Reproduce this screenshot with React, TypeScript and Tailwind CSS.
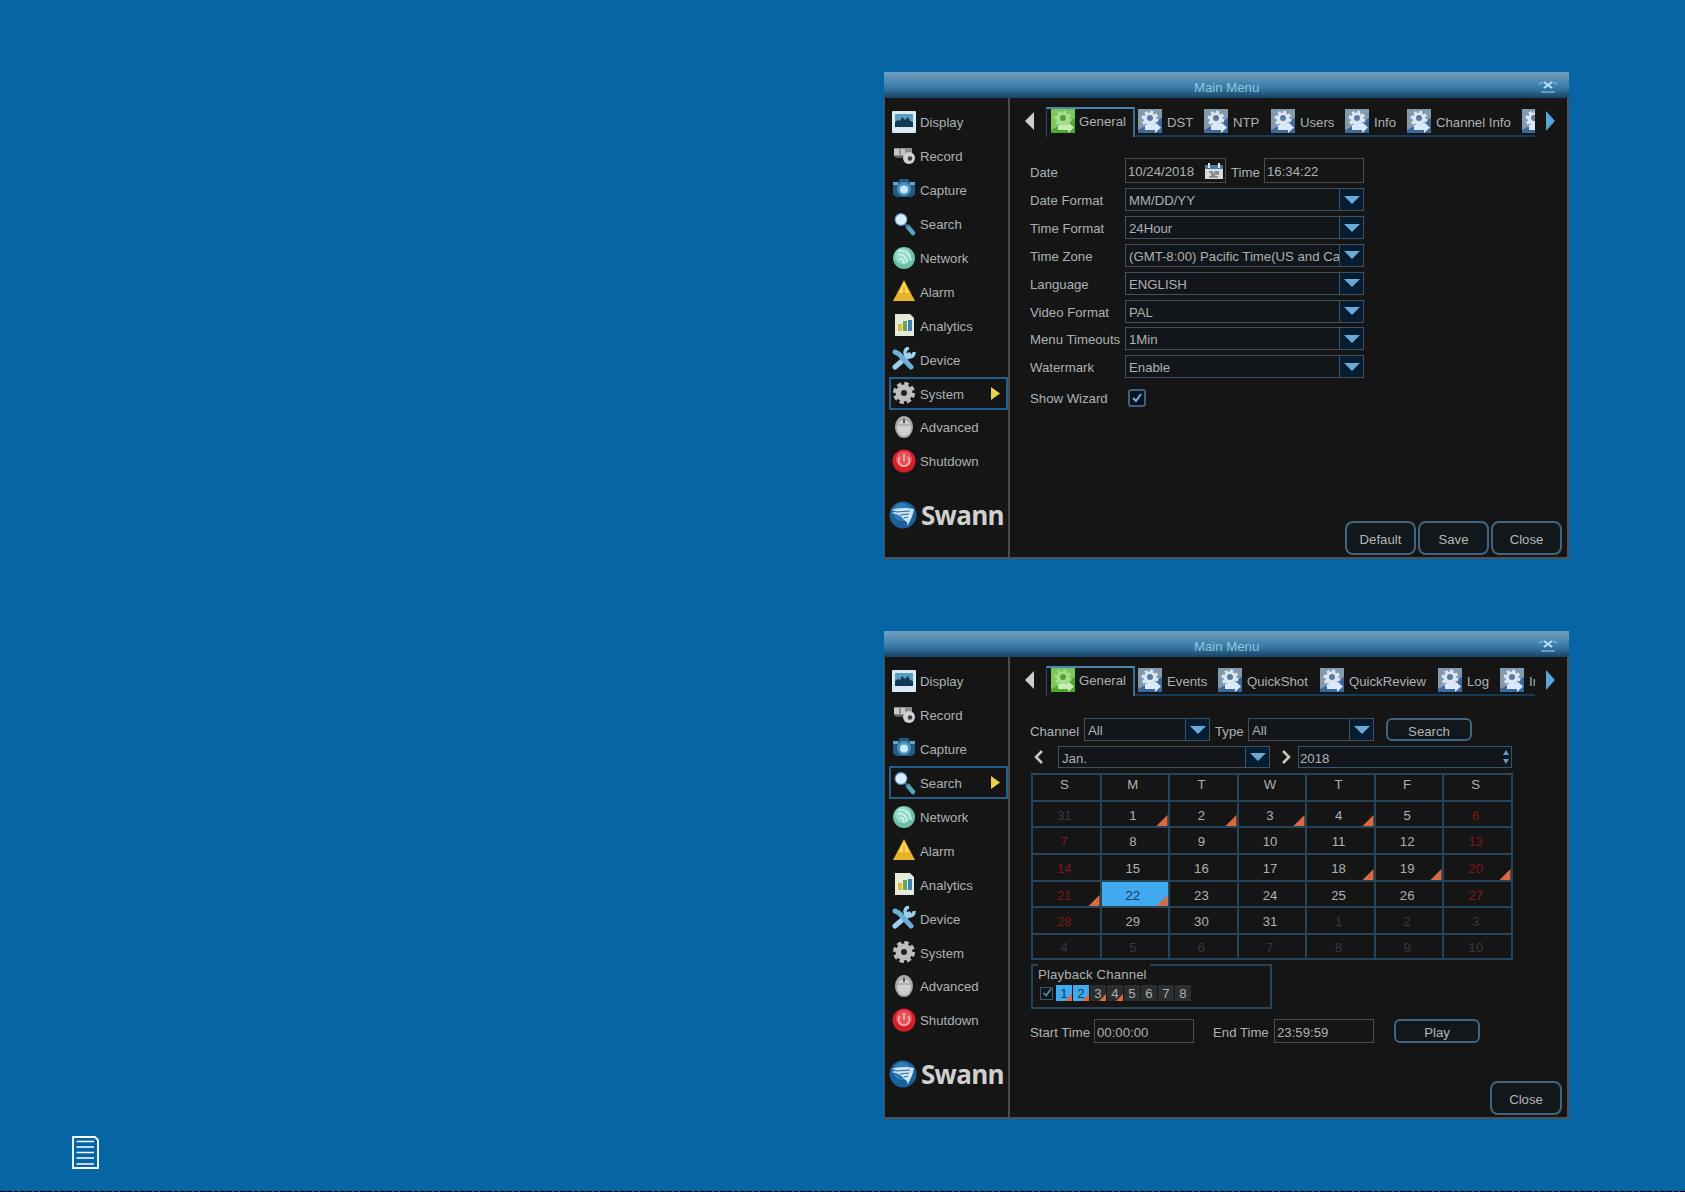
import type { ReactNode } from "react";
import clsx from "clsx";

type MenuName =
  | "Display"
  | "Record"
  | "Capture"
  | "Search"
  | "Network"
  | "Alarm"
  | "Analytics"
  | "Device"
  | "System"
  | "Advanced"
  | "Shutdown";

const MENU: MenuName[] = [
  "Display",
  "Record",
  "Capture",
  "Search",
  "Network",
  "Alarm",
  "Analytics",
  "Device",
  "System",
  "Advanced",
  "Shutdown",
];

type Tab = { label: string; width: string };

const SYSTEM_TABS: Tab[] = [
  { label: "DST", width: "w-[66px]" },
  { label: "NTP", width: "w-[67px]" },
  { label: "Users", width: "w-[74px]" },
  { label: "Info", width: "w-[62px]" },
  { label: "Channel Info", width: "w-[115px]" },
  { label: "", width: "w-[40px]" },
];

const SEARCH_TABS: Tab[] = [
  { label: "Events", width: "w-[80px]" },
  { label: "QuickShot", width: "w-[102px]" },
  { label: "QuickReview", width: "w-[118px]" },
  { label: "Log", width: "w-[62px]" },
  { label: "In", width: "w-[62px]" },
];

const SETTINGS = [
  ["Date Format", "MM/DD/YY"],
  ["Time Format", "24Hour"],
  ["Time Zone", "(GMT-8:00) Pacific Time(US and Ca"],
  ["Language", "ENGLISH"],
  ["Video Format", "PAL"],
  ["Menu Timeouts", "1Min"],
  ["Watermark", "Enable"],
];

const WEEKDAYS = ["S", "M", "T", "W", "T", "F", "S"];

// 31 Dec is the first cell shown; 42 cells in all.
const DAYS = Array.from({ length: 42 }, (_, i) => {
  const inMonth = i >= 1 && i <= 31;
  return { day: i === 0 ? 31 : inMonth ? i : i - 31, inMonth, weekend: i % 7 === 0 || i % 7 === 6 };
});
const RECORDED = [1, 2, 3, 4, 18, 19, 20, 21, 22];

function MenuIcon({ name }: { name: MenuName }) {
  switch (name) {
    case "Display":
      return (
        <>
          <rect x="0" y="1" width="24" height="22" rx="1" fill="#d9eaf2" />
          <rect x="3" y="4" width="18" height="13" fill="#5d9dbd" />
          <path d="M3 17v-5l3-2 2 1 2-4 3 3 3-3 2 4 3 1v5z" fill="#123a56" />
        </>
      );
    case "Record":
      return (
        <>
          <path d="M2 4h18v8H2z" fill="#8d8d8d" />
          <path d="M2 5h5v6H2zM9 5h4v6H9z" fill="#c6c6c6" />
          <path d="M2 12h9v2H4z" fill="#5c5c5c" />
          <circle cx="17" cy="14" r="6" fill="#d2d2d2" />
          <circle cx="18" cy="14.500" r="2.300" fill="#3d3d3d" />
        </>
      );
    case "Capture":
      return (
        <>
          <path d="M1 4h5l2-3h8l2 3h5v12l-3 3H4l-3-3z" fill="#225a82" />
          <path d="M1 4h5v3H1zM18 4h5v3h-5z" fill="#6aa6cb" />
          <circle cx="12" cy="11" r="7" fill="#4d92bd" />
          <circle cx="12" cy="11.500" r="4" fill="#c7e9f8" />
        </>
      );
    case "Search":
      return (
        <>
          <path d="M16 15l5 6" stroke="#57a2bf" strokeWidth="4.500" strokeLinecap="round" />
          <path d="M12 11l4 4" stroke="#3d6f94" strokeWidth="2" />
          <circle cx="9" cy="7.500" r="6.500" fill="#5c92c8" />
          <circle cx="9" cy="7.500" r="5.300" fill="#dceefb" />
        </>
      );
    case "Network":
      return (
        <>
          <circle cx="12" cy="12" r="11" fill="#6cc0a6" />
          <circle cx="11" cy="10" r="8" fill="#95d9c6" />
          <path
            d="M6 9c5-2 9 3 9 8M7 13c3-1 5 1 5 5M7 5c7-1 12 4 12 10"
            fill="none"
            stroke="#d2f3e9"
            strokeWidth="1.500"
          />
        </>
      );
    case "Alarm":
      return (
        <>
          <path d="M12 1L23 22H1z" fill="#e9b42c" />
          <path d="M12 3l5 11H7z" fill="#f7d85b" />
          <path d="M12 8v7M12 17v2" stroke="#d9a52a" strokeWidth="1.500" />
        </>
      );
    case "Analytics":
      return (
        <>
          <path d="M3 1h15l4 4v18H3z" fill="#e6ead8" />
          <path d="M6 11h4v7H6z" fill="#e2bb38" />
          <path d="M11 8h4v10h-4z" fill="#67a75b" />
          <path d="M16 7h4v11h-4z" fill="#3d82b5" />
        </>
      );
    case "Device":
      return (
        <>
          <path d="M3 20L17 8" stroke="#9bd0ef" strokeWidth="5" strokeLinecap="round" />
          <path d="M22 5a4.500 4.500 0 1 1-5-4" fill="none" stroke="#9bd0ef" strokeWidth="3.500" />
          <path d="M3 5l4 2 12 13" fill="none" stroke="#6eafd8" strokeWidth="5" strokeLinecap="round" />
        </>
      );
    case "System":
      return (
        <>
          <circle cx="12" cy="12" r="8.500" fill="#bdbdbd" />
          <circle cx="12" cy="12" r="9" fill="none" stroke="#bdbdbd" strokeWidth="4" strokeDasharray="4.200 2.870" />
          <circle cx="12" cy="12" r="3" fill="#222" />
        </>
      );
    case "Advanced":
      return (
        <>
          <ellipse cx="12" cy="12" rx="9" ry="11" fill="#a9a9a9" />
          <ellipse cx="12" cy="13" rx="7" ry="8" fill="#cfcfcf" />
          <path d="M5 10h14M12 2v8" stroke="#999" />
          <path d="M12 4v4" stroke="#555" strokeWidth="2" />
        </>
      );
    case "Shutdown":
      return (
        <>
          <circle cx="12" cy="12" r="11.500" fill="#d3202b" />
          <circle cx="12" cy="10" r="8" fill="#e4525a" />
          <path d="M8 8a5.500 5.500 0 1 0 8 0M12 5v7" fill="none" stroke="#f5b4b4" strokeWidth="1.700" />
        </>
      );
  }
}

function TabIcon({ active }: { active?: boolean }) {
  return (
    <svg viewBox="0 0 24 24" className="h-6 w-6 shrink-0">
      <rect width="24" height="24" fill={active ? "#4ea82f" : "#3f689a"} />
      <path d="M0 0h24v9L0 21z" fill={active ? "#7cc75c" : "#8399ae"} />
      <circle cx="12" cy="10" r="6.500" fill={active ? "#a8df8c" : "#dce7f1"} />
      <circle
        cx="12"
        cy="10"
        r="7"
        fill="none"
        stroke={active ? "#a8df8c" : "#dce7f1"}
        strokeWidth="3"
        strokeDasharray="3 2.500"
      />
      <circle cx="12" cy="9" r="3" fill={active ? "#559d3a" : "#5b7b9f"} />
      <path d="M7 16h10v-3l6 5.500-6 5.500v-3H7z" fill={active ? "#c5efb2" : "#d8eafb"} />
    </svg>
  );
}

function DropArrow() {
  return (
    <span className="flex h-full w-6 shrink-0 items-center justify-center border-l border-[#3c5565] bg-[#061c30]">
      <svg viewBox="0 0 16 8" className="h-2 w-4">
        <path d="M0 0h16L8 8z" fill="#67abd6" />
      </svg>
    </span>
  );
}

function Select({ value, className }: { value: string; className: string }) {
  return (
    <div className={clsx("flex items-center border border-[#41525d] bg-[#12161a]", className)}>
      <span className="min-w-0 flex-1 pt-[3px] pl-[3px] whitespace-nowrap">{value}</span>
      <DropArrow />
    </div>
  );
}

function Field({ value, className, children }: { value: string; className: string; children?: ReactNode }) {
  return (
    <div className={clsx("flex items-center border border-[#4a4e50] pl-[2px]", className)}>
      <span className="flex-1 pt-[3px]">{value}</span>
      {children}
    </div>
  );
}

function Button({ children, className }: { children: ReactNode; className: string }) {
  return (
    <button
      className={clsx(
        "flex items-center justify-center border-2 border-[#41657e] bg-[#12171b] text-[#b3b6b8]",
        className,
      )}
    >
      {children}
    </button>
  );
}

function Logo() {
  return (
    <div className="mt-[21px] flex h-8 items-center">
      <svg viewBox="0 0 28 32" className="h-8 w-7 shrink-0">
        <circle cx="14" cy="16" r="13.500" fill="#1b609b" />
        <circle cx="13" cy="13" r="9" fill="#2f7db8" />
        <path d="M2 11C8 9 17 8 25 10c-1 6-3 11-7 17 1-4-1-5-3-6-1-3-6-6-13-7 4-1 5-1 7-1-2-1-4-2-7-2z" fill="#cfe4f2" />
        <path d="M7 13l14-1M11 16l9-1M15 19l4-1" stroke="#276da5" strokeWidth="1.200" />
      </svg>
      <span className="ml-[4px] font-['Open_Sans',sans-serif] text-[26px] leading-8 font-bold tracking-[-0.7px] text-[#d0d0d0]">
        Swann
      </span>
    </div>
  );
}

function Sidebar({ active }: { active: MenuName }) {
  return (
    <nav className="w-[125px] shrink-0 border-r-2 border-[#4b4b4b] pt-[7px] pl-1">
      {MENU.map((name) => (
        <div key={name} className="flex h-[33.9px] items-center">
          <div
            className={clsx(
              "flex h-[33px] w-full items-center border-2 pl-[1px]",
              name === active ? "border-[#23608f]" : "border-transparent",
            )}
          >
            <svg viewBox="0 0 24 24" className="h-6 w-6 shrink-0">
              <MenuIcon name={name} />
            </svg>
            <span className="ml-1 flex-1 pt-[3px]">{name}</span>
            {name === active && (
              <svg viewBox="0 0 9 13" className="mr-[6px] h-[13px] w-[9px]">
                <path d="M0 0l9 6.500L0 13z" fill="#ead34b" />
              </svg>
            )}
          </div>
        </div>
      ))}
      <Logo />
    </nav>
  );
}

function TabBar({ tabs }: { tabs: Tab[] }) {
  return (
    <div className="flex h-[30px] items-start pl-[15px]">
      <svg viewBox="0 0 9 18" className="mt-[5px] h-[18px] w-[9px]">
        <path d="M9 0v18L0 9z" fill="#c9ced0" />
      </svg>
      <div className="ml-[12px] flex h-[30px] w-[89px] items-start border-t-2 border-r-2 border-l border-t-[#4d86ad] border-r-[#3a6c91] border-l-[#294a61] pl-1">
        <TabIcon active />
        <span className="pt-[5px] pl-1">General</span>
      </div>
      <div className="flex h-[30px] w-[400px] overflow-hidden border-b-2 border-[#133c5b] pl-[3px]">
        {tabs.map((tab) => (
          <div key={tab.label} className={clsx("flex shrink-0 items-center", tab.width)}>
            <TabIcon />
            <span className="pt-[4px] pl-[5px] whitespace-nowrap">{tab.label}</span>
          </div>
        ))}
      </div>
      <svg viewBox="0 0 9 20" className="mt-[4px] ml-[11px] h-5 w-[9px]">
        <path d="M0 0v20l9-10z" fill="#5aa5d7" />
      </svg>
    </div>
  );
}

function Window({
  active,
  tabs,
  className,
  children,
}: {
  active: MenuName;
  tabs: Tab[];
  className: string;
  children: ReactNode;
}) {
  return (
    <section className={clsx("flex w-[685px] flex-col bg-[#151515]", className)}>
      <header className="flex h-[26px] shrink-0 items-center bg-linear-to-b from-[#709fbe] via-[#377ba7] via-60% to-[#174464] text-[#8fc5df]">
        <span className="flex-1 pt-[5px] pl-[310px]">Main Menu</span>
        <svg viewBox="0 0 20 14" className="mt-[3px] mr-[11px] h-[14px] w-5">
          <path d="M6 2l8 6M14 2L6 8" stroke="#b5e2f6" strokeWidth="2" />
          <path d="M1 4l4-2M15 2l4 2M3 12h14" stroke="#73aecd" strokeWidth="1.500" />
        </svg>
      </header>
      <div className="flex min-h-0 flex-1 border-r-2 border-b-2 border-l border-[#505050]">
        <Sidebar active={active} />
        <main className="flex min-w-0 flex-1 flex-col pt-[9px]">
          <TabBar tabs={tabs} />
          {children}
        </main>
      </div>
    </section>
  );
}

function SystemPanel() {
  return (
    <>
      <div className="flex flex-1 flex-col pt-[21px] pl-[20px]">
        <div className="flex h-[25px] items-center">
          <span className="w-[95px] pt-1">Date</span>
          <Field value="10/24/2018" className="h-[25px] w-[101px]">
            <svg viewBox="0 0 18 16" className="mr-[2px] h-4 w-[18px]">
              <path d="M0 3h18v13H0z" fill="#d9dcde" />
              <path d="M0 2h18v4H0z" fill="#497da4" />
              <path d="M4 0v5M14 0v5" stroke="#e3e3e3" strokeWidth="2" />
              <path d="M4 9h3v5H4M9 9h4v2H9v3h4" fill="none" stroke="#555" strokeWidth="1.200" />
            </svg>
          </Field>
          <span className="w-[38px] pt-[4px] pl-[5px]">Time</span>
          <Field value="16:34:22" className="h-[25px] w-[100px]" />
        </div>
        <div className="mt-[3px] flex flex-col">
          {SETTINGS.map(([label, value]) => (
            <div key={label} className="flex h-[27.8px] items-center">
              <span className="w-[95px] pt-[3px] whitespace-nowrap">{label}</span>
              <Select value={value} className="h-[23px] w-[239px]" />
            </div>
          ))}
        </div>
        <div className="mt-[7px] flex h-5 items-center">
          <span className="w-[98px] pt-[3px]">Show Wizard</span>
          <span className="flex h-[18px] w-[18px] items-center justify-center rounded-[3px] border-2 border-[#3e6079] bg-[#07131e]">
            <svg viewBox="0 0 12 12" className="h-3 w-3">
              <path d="M2 6l3 3 5-7" fill="none" stroke="#72b4e1" strokeWidth="2" />
            </svg>
          </span>
        </div>
      </div>
      <div className="flex justify-end gap-[2px] pr-[5px] pb-[2px]">
        <Button className="h-[34px] w-[71px] rounded-lg pt-[4px]">Default</Button>
        <Button className="h-[34px] w-[71px] rounded-lg pt-[4px]">Save</Button>
        <Button className="h-[34px] w-[71px] rounded-lg pt-[4px]">Close</Button>
      </div>
    </>
  );
}

function Marker({ small }: { small?: boolean }) {
  return (
    <svg viewBox="0 0 12 12" className={clsx("absolute right-0 bottom-0", small ? "h-[7px] w-[7px]" : "h-[11px] w-[12px]")}>
      <path d="M12 0v12H0z" fill="#d96b42" />
    </svg>
  );
}

function Calendar() {
  return (
    <div className="mt-[5px] ml-[1px] grid w-[482px] grid-cols-7 grid-rows-[27px_26px_27px_27px_26px_27px_25px] border-t-2 border-l-2 border-[#26455a]">
      {WEEKDAYS.map((d, i) => (
        <div key={i} className="flex items-center justify-center border-r-2 border-b-2 border-[#26455a] pr-1 pb-[5px]">
          {d}
        </div>
      ))}
      {DAYS.map(({ day, inMonth, weekend }, i) => {
        const selected = inMonth && day === 22;
        return (
          <div
            key={i}
            className={clsx(
              "relative flex items-center justify-center border-r-2 border-b-2 border-[#26455a] pt-[3px] pr-1",
              selected && "bg-[#41a9ed] text-[#123d5e]",
              !inMonth && "text-[#393939]",
              inMonth && weekend && "text-[#7d1519]",
            )}
          >
            {day}
            {inMonth && RECORDED.includes(day) && <Marker />}
          </div>
        );
      })}
    </div>
  );
}

function PlaybackChannels() {
  return (
    <fieldset className="mt-[4px] ml-[1px] flex h-[45px] w-[241px] flex-col border-2 border-[#26455a] pl-[5px]">
      <div className="-mt-[2px] w-[112px] bg-[#151515] pt-[1px] leading-[19px] tracking-[0.15px]">Playback Channel</div>
      <div className="mt-[1px] flex h-4 items-center pl-[2px]">
        <span className="mr-[3px] flex h-[13px] w-[13px] items-center justify-center border border-[#315c78]">
          <svg viewBox="0 0 12 12" className="h-[10px] w-[10px]">
            <path d="M2 6l3 3 6-8" fill="none" stroke="#4d92ba" strokeWidth="2" />
          </svg>
        </span>
        <div className="flex gap-[1px]">
          {[1, 2, 3, 4, 5, 6, 7, 8].map((n) => (
            <span
              key={n}
              className={clsx(
                "relative flex h-4 w-4 items-center justify-center pt-[2px]",
                n <= 2 ? "bg-[#41a9ed] text-[#123d5e]" : "bg-[#2b2d2e]",
              )}
            >
              {n}
              {n <= 4 && <Marker small />}
            </span>
          ))}
        </div>
      </div>
    </fieldset>
  );
}

function SearchPanel() {
  return (
    <>
      <div className="flex flex-1 flex-col pt-[22px] pl-[20px]">
        <div className="flex h-[23px] items-center">
          <span className="w-[54px] pt-[4px]">Channel</span>
          <Select value="All" className="h-[23px] w-[126px]" />
          <span className="w-[38px] pt-[4px] pl-[5px]">Type</span>
          <Select value="All" className="h-[23px] w-[126px]" />
          <Button className="ml-[12px] h-[23px] w-[86px] rounded-md pt-[4px]">Search</Button>
        </div>
        <div className="mt-[5px] flex h-[22px] items-center">
          <svg viewBox="0 0 10 14" className="ml-[4px] h-[14px] w-[10px]">
            <path d="M8 1L2 7l6 6" fill="none" stroke="#c8c8c8" strokeWidth="2.500" />
          </svg>
          <Select value="Jan." className="ml-[14px] h-[22px] w-[212px]" />
          <svg viewBox="0 0 10 14" className="ml-[11px] h-[14px] w-[10px]">
            <path d="M2 1l6 6-6 6" fill="none" stroke="#cfc8b8" strokeWidth="2.500" />
          </svg>
          <div className="ml-[7px] flex h-[22px] w-[214px] items-center border border-[#2f5672] bg-[#12161a] pr-[2px] pl-[1px]">
            <span className="flex-1 pt-[4px]">2018</span>
            <svg viewBox="0 0 6 14" className="h-[14px] w-[6px]">
              <path d="M3 0l3 5H0zM3 14l3-5H0z" fill="#5d9fc7" />
            </svg>
          </div>
        </div>
        <Calendar />
        <PlaybackChannels />
        <div className="mt-[10px] flex h-[24px] items-center">
          <span className="w-[64px] whitespace-nowrap pt-[3px]">Start Time</span>
          <Field value="00:00:00" className="h-[24px] w-[100px]" />
          <span className="w-[80px] pt-[3px] pl-[19px] whitespace-nowrap">End Time</span>
          <Field value="23:59:59" className="h-[24px] w-[100px]" />
          <Button className="ml-[20px] h-[24px] w-[86px] rounded-md pt-[3px]">Play</Button>
        </div>
      </div>
      <div className="flex justify-end pr-[5px] pb-[2px]">
        <Button className="h-[34px] w-[72px] rounded-lg pt-[4px]">Close</Button>
      </div>
    </>
  );
}

export default function App() {
  return (
    <div className="flex h-[1192px] w-[1685px] flex-col overflow-hidden bg-[#0565a5] font-['Liberation_Sans',Arial,sans-serif] text-[13.2px] leading-4 text-[#adb1b3]">
      <div className="flex flex-1">
        <aside className="flex w-[884px] flex-col justify-end pb-[22px] pl-[72px]">
          <svg viewBox="0 0 27 33" className="h-[33px] w-[27px]" fill="none" stroke="#fff">
            <path d="M1 1h22l3 3v28H1z" strokeWidth="1.800" />
            <path d="M4.500 5.500h17.500M4.500 11h17.500M4.500 16.500h17.500M4.500 22h17.500M4.500 28h17.500" strokeWidth="1.700" />
          </svg>
        </aside>
        <div className="flex flex-col gap-[72px] pt-[72px]">
          <Window active="System" tabs={SYSTEM_TABS} className="h-[487px]">
            <SystemPanel />
          </Window>
          <Window active="Search" tabs={SEARCH_TABS} className="h-[488px]">
            <SearchPanel />
          </Window>
        </div>
      </div>
      <div className="h-px bg-[repeating-linear-gradient(90deg,#000_0_5px,#24306c_5px_7px,#000_7px_12px,#733b35_12px_14px,#111_14px_19px,#3d8a87_19px_20px)]" />
    </div>
  );
}
